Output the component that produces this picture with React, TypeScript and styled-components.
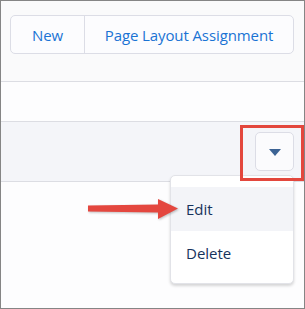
import React from 'react';
import styled, { createGlobalStyle } from 'styled-components';

const GlobalStyle = createGlobalStyle`
  html, body {
    margin: 0;
    padding: 0;
    background: #ffffff;
  }
  body {
    font-family: 'Open Sans', 'Liberation Sans', Arial, sans-serif;
  }
`;

const Frame = styled.div`
  position: relative;
  width: 305px;
  height: 309px;
  box-sizing: border-box;
  border: 1px solid #858585;
  background: #fdfdfe;
  overflow: hidden;
  display: flex;
  flex-direction: column;
`;

const Header = styled.div`
  height: 81px;
  box-sizing: border-box;
  padding: 14px 10px 0 9px;
  background: #fafafb;
  border-bottom: 1px solid #dcdde3;
`;

const ButtonGroup = styled.div`
  display: flex;
  height: 39px;
  box-sizing: border-box;
  border: 1px solid #dcdde6;
  border-radius: 5px;
  background: #fcfcfe;
  overflow: hidden;
`;

const GroupButton = styled.div<{ $width?: number }>`
  display: flex;
  align-items: center;
  justify-content: center;
  ${(p) => (p.$width ? `width: ${p.$width}px;` : 'flex: 1;')}
  font-size: 15px;
  letter-spacing: -0.1px;
  color: #1a73d4;
  & + & {
    border-left: 1px solid #dcdde6;
  }
`;

const Row = styled.div<{ $height: number; $shade?: boolean }>`
  height: ${(p) => p.$height}px;
  background: ${(p) => (p.$shade ? '#f4f5f9' : '#fdfdfe')};
  border-bottom: 1px solid #dcdde3;
  display: flex;
  align-items: center;
  justify-content: flex-end;
  padding-right: 10px;
`;

const MenuButton = styled.div`
  width: 39px;
  height: 39px;
  box-sizing: border-box;
  border: 1px solid #dcdde6;
  border-radius: 5px;
  background: #fbfbfd;
  display: flex;
  align-items: center;
  justify-content: center;
`;

const Caret = styled.div`
  width: 0;
  height: 0;
  margin-top: 2px;
  border-left: 6px solid transparent;
  border-right: 6px solid transparent;
  border-top: 7px solid #3c6394;
`;

const Menu = styled.div`
  position: absolute;
  left: 169px;
  top: 174px;
  width: 124px;
  height: 109px;
  box-sizing: border-box;
  padding-top: 11px;
  background: #ffffff;
  border: 1px solid #e2e3e8;
  border-radius: 5px;
  box-shadow: 0 2px 3px rgba(0, 0, 0, 0.16);
`;

const MenuItem = styled.div<{ $active?: boolean }>`
  height: 44px;
  display: flex;
  align-items: center;
  padding-left: 15px;
  font-size: 15px;
  color: #16325c;
  background: ${(p) => (p.$active ? '#f3f4f8' : 'transparent')};
`;

const Highlight = styled.div`
  position: absolute;
  left: 239px;
  top: 124px;
  width: 64px;
  height: 56px;
  box-sizing: border-box;
  border: 3px solid #e3473d;
`;

const Arrow = styled.svg`
  position: absolute;
  left: 84px;
  top: 195px;
  filter: drop-shadow(1px 1px 1px rgba(0, 0, 0, 0.25));
`;

export default function App() {
  return (
    <>
      <GlobalStyle />
      <Frame>
        <Header>
          <ButtonGroup>
            <GroupButton $width={73}>New</GroupButton>
            <GroupButton>Page Layout Assignment</GroupButton>
          </ButtonGroup>
        </Header>
        <Row $height={39} />
        <Row $height={59} $shade>
          <MenuButton>
            <Caret />
          </MenuButton>
        </Row>
        <Menu>
          <MenuItem $active>Edit</MenuItem>
          <MenuItem>Delete</MenuItem>
        </Menu>
        <Highlight />
        <Arrow width="100" height="30" viewBox="0 0 100 30">
          <path d="M3 9.5 L73 8.5 L73 3 L93 12.5 L73 23 L73 16.5 L3 15.5 Z" fill="#e4473f" />
        </Arrow>
      </Frame>
    </>
  );
}
